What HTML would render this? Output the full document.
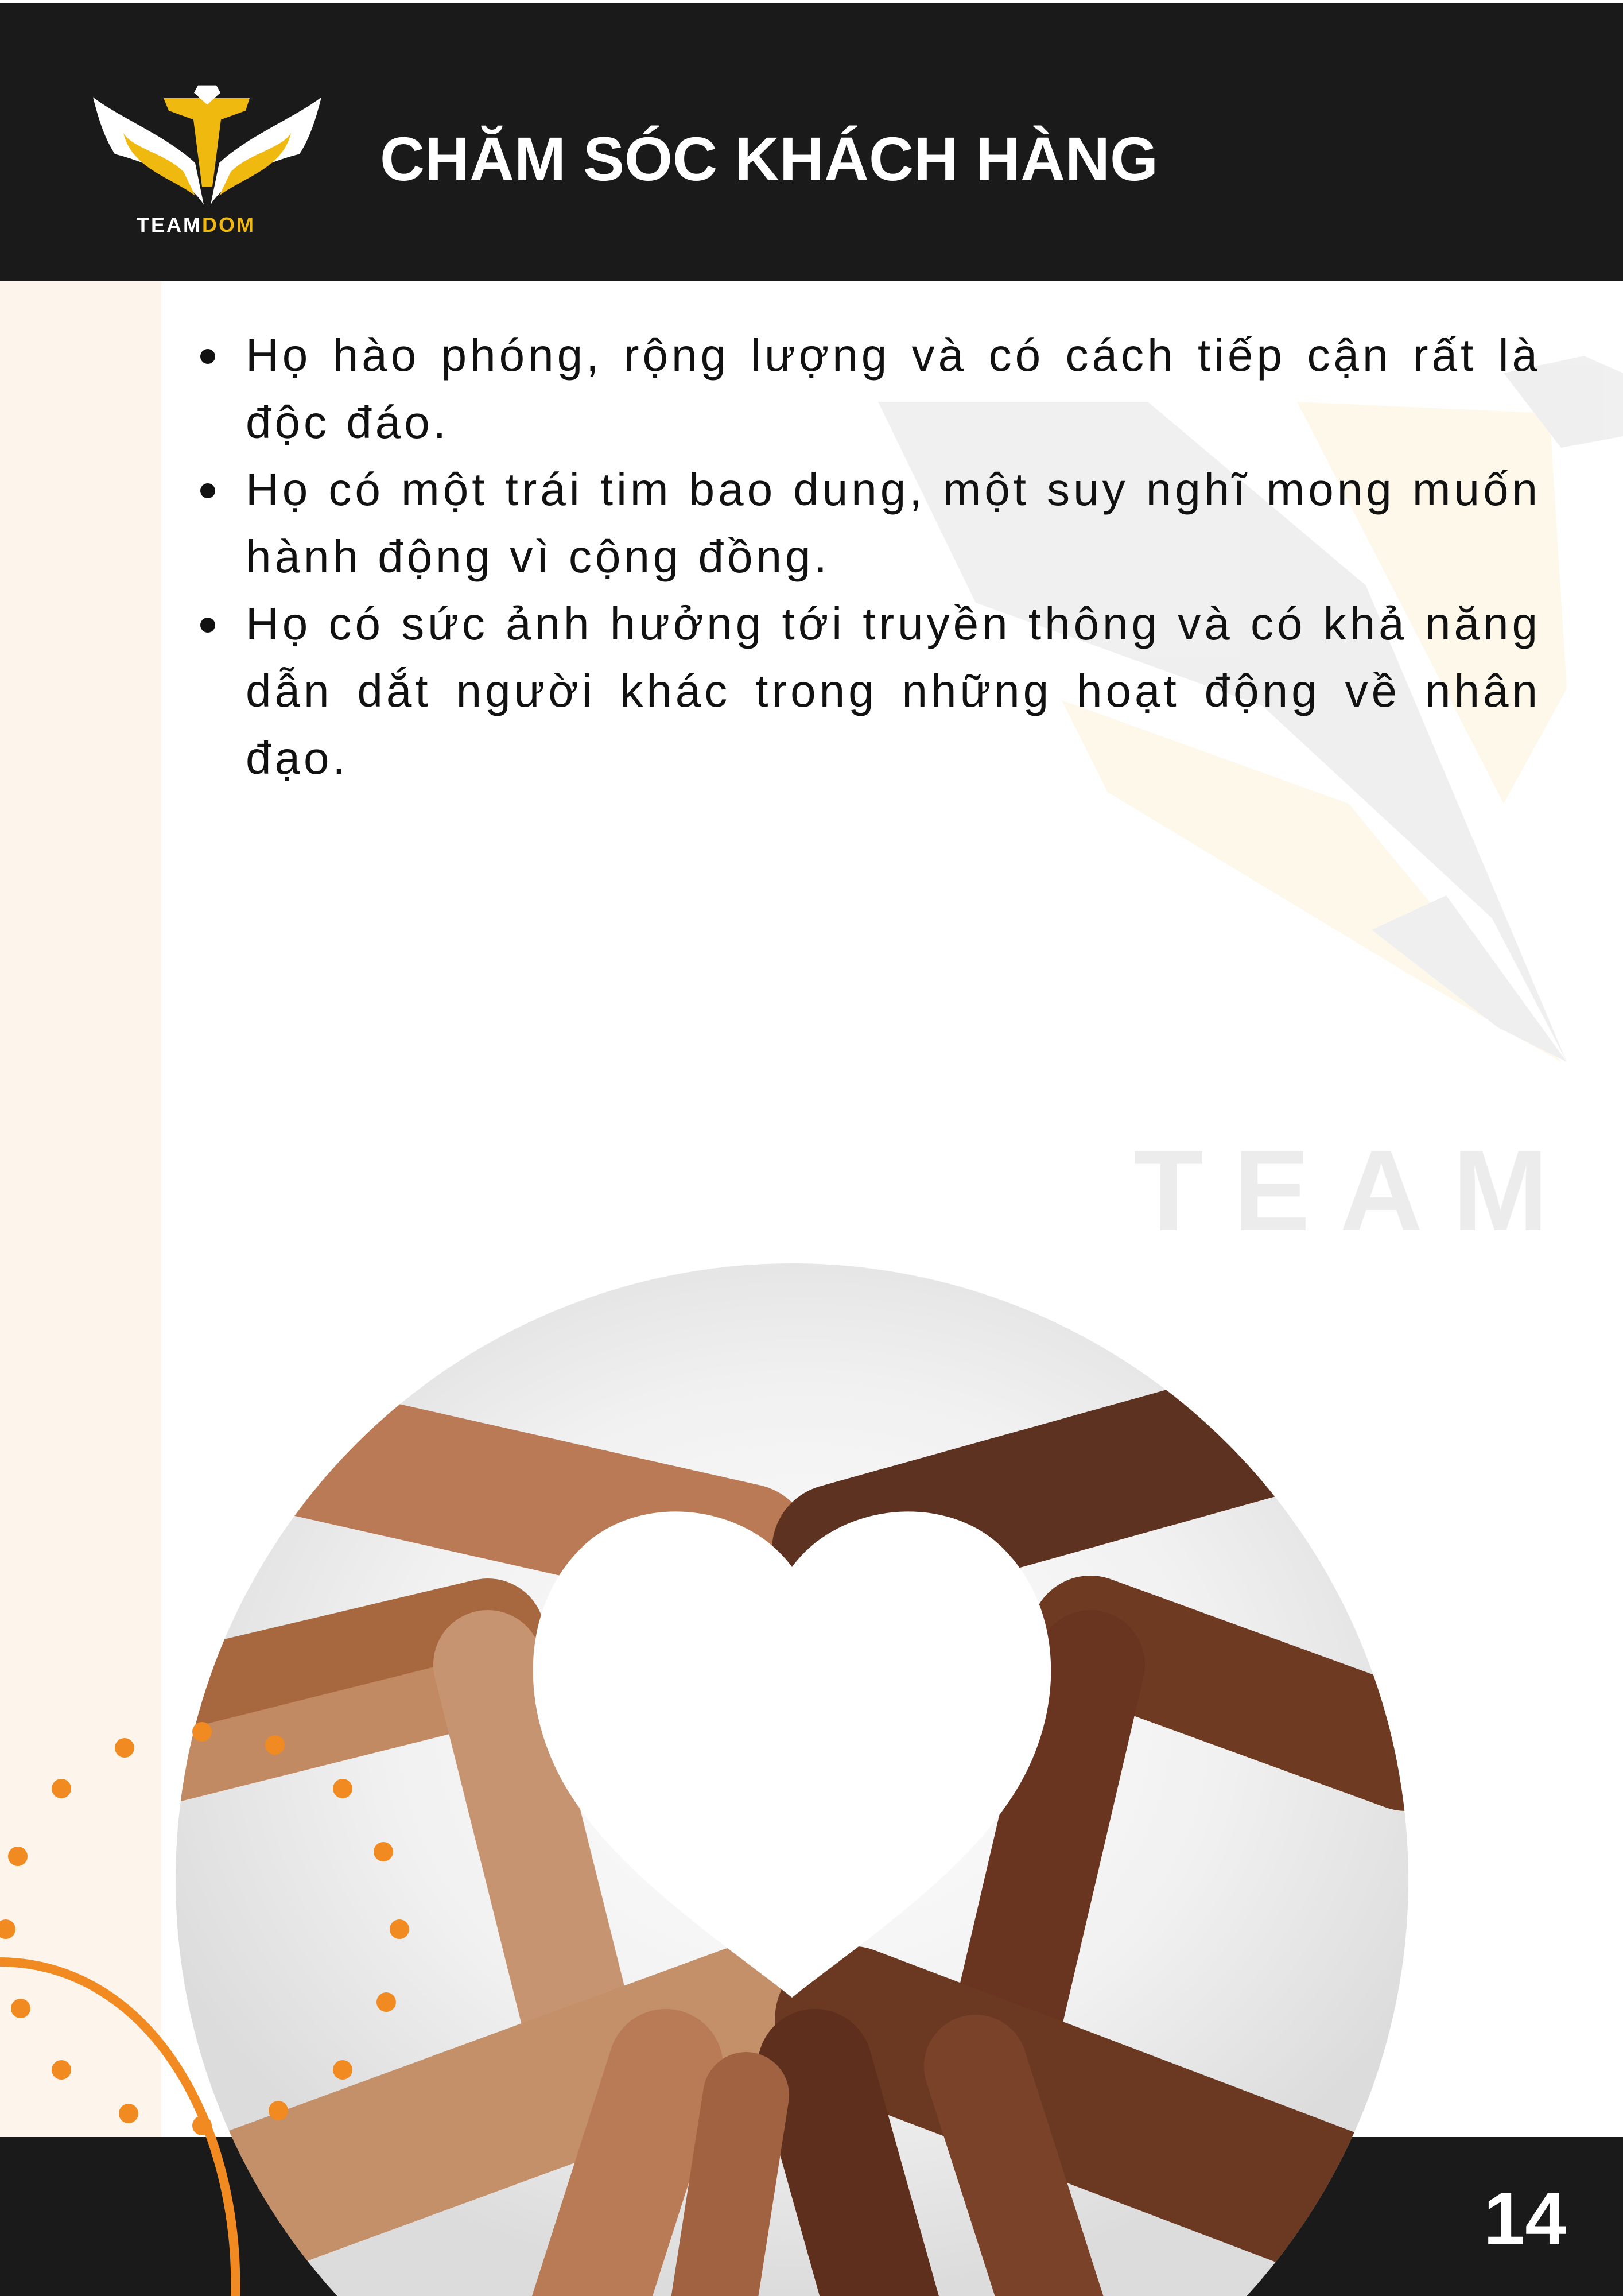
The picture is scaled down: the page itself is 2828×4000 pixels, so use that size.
<!DOCTYPE html>
<html><head><meta charset="utf-8"><style>
html,body{margin:0;padding:0}
body{width:2828px;height:4000px;position:relative;overflow:hidden;background:#fff;font-family:"Liberation Sans",sans-serif}
.abs{position:absolute}
#hdr{left:0;top:5px;width:2828px;height:485px;background:#1a1a1a}
#title{left:662px;top:214px;font-size:108px;font-weight:bold;color:#fff;letter-spacing:0px;white-space:nowrap}
#strip{left:0;top:490px;width:281px;height:3233px;background:#fdf4ec}
#foot{left:0;top:3723px;width:2828px;height:277px;background:#1a1a1a}
#txt{left:428px;top:560px;width:2257px;font-size:80px;line-height:117px;color:#111;text-align:justify;letter-spacing:6px}
#txt p{margin:0;position:relative;text-align-last:left}
#txt p::before{content:"";position:absolute;left:-79px;top:48px;width:26px;height:26px;border-radius:50%;background:#111}
#wmt{left:1975px;top:1960px;font-size:200px;font-weight:bold;color:#ececec;letter-spacing:52px;white-space:nowrap}
#num{left:2585px;top:3790px;font-size:130px;font-weight:bold;color:#fff}
</style></head><body>
<div class="abs" id="hdr"></div>
<div class="abs" id="strip"></div>
<svg class="abs" style="left:0;top:0" width="2828" height="4000" viewBox="0 0 2828 4000">
 <g opacity="0.55">
  <polygon points="1530,700 2000,700 2380,1020 2730,1850 2600,1600 2200,1230 1700,1050" fill="#e3e3e3"/>
  <polygon points="1850,1220 2350,1400 2720,1850 2460,1700 1930,1380" fill="#fdf3d8"/>
  <polygon points="2260,700 2700,720 2730,1200 2620,1400" fill="#fdf3d8"/>
  <polygon points="2390,1620 2520,1560 2730,1850 2610,1790" fill="#e3e3e3"/>
  <polygon points="2620,650 2760,620 2828,650 2828,760 2720,780" fill="#e3e3e3"/>
 </g>
</svg>
<div class="abs" id="wmt">TEAM</div>
<div class="abs" id="foot"></div>
<div class="abs" id="txt">
<p>Họ hào phóng, rộng lượng và có cách tiếp cận rất là độc đáo.</p>
<p>Họ có một trái tim bao dung, một suy nghĩ mong muốn hành động vì cộng đồng.</p>
<p>Họ có sức ảnh hưởng tới truyền thông và có khả năng dẫn dắt người khác trong những hoạt động về nhân đạo.</p>
</div>
<svg class="abs" style="left:0;top:0" width="2828" height="4000" viewBox="0 0 2828 4000">
 <defs>
  <clipPath id="c"><circle cx="1380" cy="3275" r="1074"/></clipPath>
  <radialGradient id="g" cx="0.5" cy="0.45" r="0.55"><stop offset="0" stop-color="#ffffff"/><stop offset="0.6" stop-color="#f1f1f1"/><stop offset="1" stop-color="#dcdcdc"/></radialGradient>
 </defs>
 <g clip-path="url(#c)">
  <rect x="300" y="2200" width="2200" height="1800" fill="url(#g)"/>
  <g stroke-linecap="round" fill="none">
   <line x1="500" y1="2520" x2="1300" y2="2700" stroke="#b97a55" stroke-width="230"/>
   <line x1="300" y1="2980" x2="850" y2="2850" stroke="#a8683f" stroke-width="200"/>
   <line x1="300" y1="3080" x2="820" y2="2950" stroke="#c28a62" stroke-width="120"/>
   <line x1="2250" y1="2480" x2="1460" y2="2700" stroke="#5e3220" stroke-width="230"/>
   <line x1="2450" y1="3050" x2="1900" y2="2850" stroke="#6e3a22" stroke-width="210"/>
   <line x1="850" y1="2900" x2="1000" y2="3500" stroke="#c69471" stroke-width="190"/>
   <line x1="1900" y1="2900" x2="1760" y2="3500" stroke="#6a3520" stroke-width="190"/>
   <line x1="400" y1="3850" x2="1300" y2="3520" stroke="#c4906a" stroke-width="260"/>
   <line x1="2350" y1="3850" x2="1480" y2="3520" stroke="#6b3822" stroke-width="260"/>
   <line x1="1000" y1="4100" x2="1160" y2="3600" stroke="#b87b55" stroke-width="200"/>
   <line x1="1560" y1="4100" x2="1420" y2="3600" stroke="#5e2f1c" stroke-width="200"/>
   <line x1="1230" y1="4100" x2="1300" y2="3650" stroke="#a06240" stroke-width="150"/>
   <line x1="1860" y1="4100" x2="1700" y2="3600" stroke="#7a4229" stroke-width="180"/>
  </g>
  <path d="M1380,2730 C1300,2620 1120,2600 1020,2690 C900,2800 900,3000 1010,3150 C1100,3280 1280,3400 1380,3480 C1480,3400 1660,3280 1750,3150 C1860,3000 1860,2800 1740,2690 C1640,2600 1460,2620 1380,2730 Z" fill="#fff"/>
 </g>
 <g fill="#f28a22">
  <circle cx="217" cy="3045" r="17"/><circle cx="352" cy="3017" r="17"/><circle cx="479" cy="3040" r="17"/>
  <circle cx="107" cy="3116" r="17"/><circle cx="597" cy="3116" r="17"/>
  <circle cx="31" cy="3234" r="17"/><circle cx="668" cy="3226" r="17"/>
  <circle cx="10" cy="3361" r="17"/><circle cx="696" cy="3361" r="17"/>
  <circle cx="36" cy="3499" r="17"/><circle cx="673" cy="3488" r="17"/>
  <circle cx="107" cy="3606" r="17"/><circle cx="597" cy="3606" r="17"/>
  <circle cx="224" cy="3682" r="17"/><circle cx="352" cy="3703" r="17"/><circle cx="485" cy="3677" r="17"/>
 </g>
 <path d="M0,3418 C260,3420 420,3700 410,4010" fill="none" stroke="#f28a22" stroke-width="16"/>
 <!-- logo -->
 <g transform="translate(0,81) scale(1,0.52)">
  <path d="M162,170 C210,240 290,300 340,390 L355,530 C330,450 260,390 200,360 C180,300 170,230 162,170 Z" fill="#fff"/>
  <path d="M560,170 C512,240 432,300 382,390 L367,530 C392,450 462,390 522,360 C542,300 552,230 560,170 Z" fill="#fff"/>
  <path d="M285,173 L435,173 L428,215 L385,245 L370,470 L352,470 L337,245 L294,215 Z" fill="#f0b90f"/>
  <path d="M215,290 C230,340 290,360 320,420 L340,500 C300,440 230,410 215,290 Z" fill="#f0b90f"/>
  <path d="M507,290 C492,340 432,360 402,420 L382,500 C422,440 492,410 507,290 Z" fill="#f0b90f"/>
  <path d="M345,130 L377,130 L384,155 L361,195 L338,155 Z" fill="#fff"/>
 </g>
 <text x="238" y="404" font-size="36" font-weight="bold" letter-spacing="3" fill="#fff" font-family="Liberation Sans, sans-serif">TEAM<tspan fill="#f0b90f">DOM</tspan></text>
</svg>
<div class="abs" id="title">CHĂM SÓC KHÁCH HÀNG</div>
<div class="abs" id="num">14</div>
</body></html>
